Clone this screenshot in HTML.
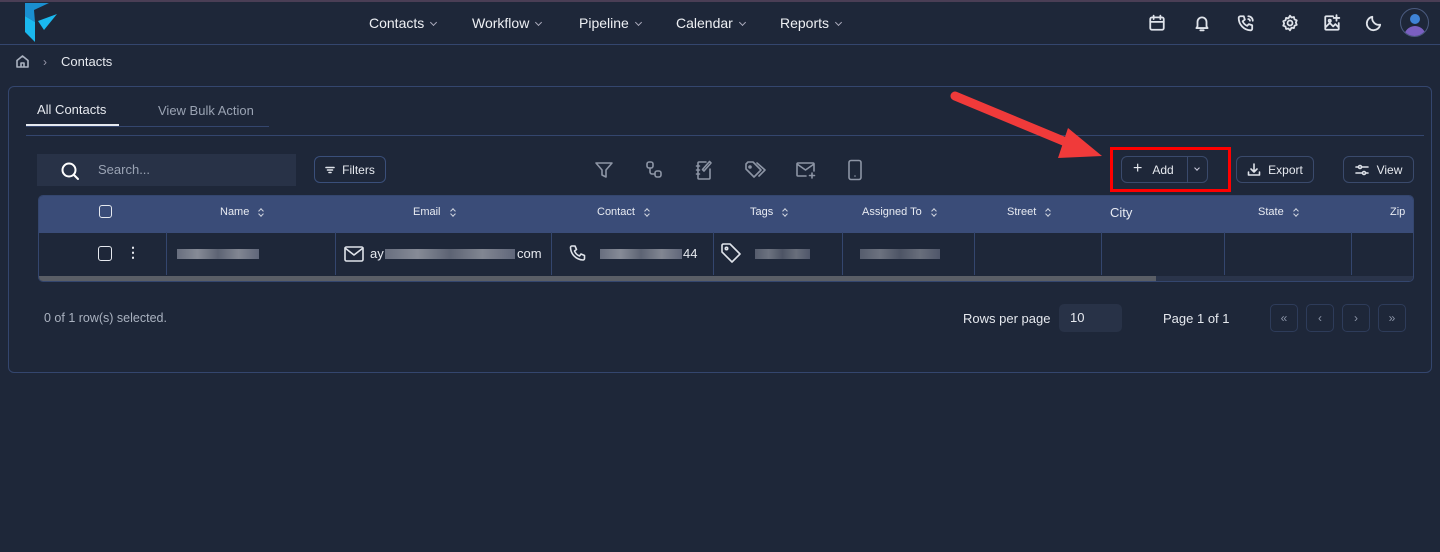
<!DOCTYPE html>
<html><head><meta charset="utf-8"><style>
*{box-sizing:border-box;margin:0;padding:0}
body{width:1440px;height:552px;background:#1e2739;font-family:"Liberation Sans",sans-serif;color:#e6e9ef;position:relative;overflow:hidden;font-size:13px}
.a{position:absolute}
.nav{font-size:14px;color:#eef0f4}
.nav i{display:inline-block;width:5px;height:5px;border-right:1px solid #aab;border-bottom:1px solid #aab;transform:rotate(45deg);margin-left:7px;position:relative;top:-3px}
svg{position:absolute;fill:none;stroke:#dfe3ea;stroke-width:1.6;stroke-linecap:round;stroke-linejoin:round}
.ic svg{stroke:#8d95a5}
.btn{position:absolute;border:1px solid #3a4a6c;border-radius:6px;height:27px;font-size:12px;color:#e6e9ef;display:flex;align-items:center;justify-content:center}
.th{position:absolute;top:206px;font-size:11px;color:#e8ebf2;display:flex;align-items:center}
.th b{display:inline-block;width:6px;height:10px;margin-left:9px;position:relative}
.th b:before,.th b:after{content:"";position:absolute;left:1px;width:3px;height:3px;border-left:1px solid #cfd4de;border-top:1px solid #cfd4de}
.th b:before{top:2px;transform:rotate(45deg)}
.th b:after{top:5px;transform:rotate(225deg)}
.vl{position:absolute;top:232px;height:43px;width:1px;background:#34466e}
.blur{position:absolute;height:10px;background:linear-gradient(90deg,#7a8090,#a0a4ae,#6c7282,#9a9ea8,#70768a);opacity:.8}
.pg{position:absolute;top:304px;width:28px;height:28px;border:1px solid #2e3c5a;border-radius:5px;color:#8a93a6;font-size:12px;text-align:center;line-height:26px}
</style></head><body>
<div class="a" style="left:0;top:0;width:1440px;height:2px;background:#4a3e55"></div>
<div class="a" style="left:0;top:44px;width:1440px;height:1px;background:#34466e"></div>
<svg style="left:24px;top:2px;stroke:none" width="36" height="42" viewBox="0 0 36 42"><path d="M1 1L25 1L10 8L11 20L1 14Z" fill="#1a8fd0"/><path d="M1 14L11 20L11 40L1 30Z" fill="#1ab8ee"/><path d="M14 19L33 12L20 28Z" fill="#1ab8ee"/></svg>
<div class="a nav" style="left:369px;top:15px">Contacts<i></i></div>
<div class="a nav" style="left:472px;top:15px">Workflow<i></i></div>
<div class="a nav" style="left:579px;top:15px">Pipeline<i></i></div>
<div class="a nav" style="left:676px;top:15px">Calendar<i></i></div>
<div class="a nav" style="left:780px;top:15px">Reports<i></i></div>
<svg style="left:1148px;top:14px" width="18" height="18" viewBox="0 0 16 16"><rect x="2" y="3" width="12" height="11" rx="1.5"/><path d="M2 7h12M5 1.5v3M11 1.5v3"/></svg>
<svg style="left:1193px;top:14px" width="18" height="18" viewBox="0 0 16 16"><path d="M4 11V7a4 4 0 018 0v4l1 1.5H3z M6.5 14.5h3"/></svg>
<svg style="left:1237px;top:14px" width="18" height="18" viewBox="0 0 16 16"><path d="M3 2h3l1 3-2 1.5a8 8 0 004 4L10.5 9l3 1v3a1.5 1.5 0 01-1.5 1.5A11 11 0 011.5 3.5 1.5 1.5 0 013 2zM10 2a4 4 0 014 4M10 4.5a1.5 1.5 0 011.5 1.5"/></svg>
<svg style="left:1281px;top:14px" width="18" height="18" viewBox="0 0 16 16"><circle cx="8" cy="8" r="2.2"/><path d="M8 1.5l1.4 1.6 2.1-.4.5 2.1 2 .8-.8 2 .8 2-2 .8-.5 2.1-2.1-.4L8 14.5l-1.4-1.6-2.1.4-.5-2.1-2-.8.8-2-.8-2 2-.8.5-2.1 2.1.4z"/></svg>
<svg style="left:1323px;top:14px" width="18" height="18" viewBox="0 0 16 16"><path d="M9 2H3a1 1 0 00-1 1v10a1 1 0 001 1h10a1 1 0 001-1V8M2 12l4-4 3 3 2-2 3 3M12 1v5M9.5 3.5h5"/><circle cx="6" cy="6" r="1"/></svg>
<svg style="left:1365px;top:14px" width="18" height="18" viewBox="0 0 16 16"><path d="M13.5 9.5A6 6 0 016.5 2.5a6 6 0 107 7z"/></svg>
<div class="a" style="left:1400px;top:8px;width:29px;height:29px;border-radius:50%;border:1px solid #4a5a7e;overflow:hidden;background:#1e2739">
<div class="a" style="left:9px;top:5px;width:10px;height:10px;border-radius:50%;background:#3f83d6"></div>
<div class="a" style="left:3px;top:17px;width:22px;height:14px;border-radius:11px 11px 0 0;background:#7a5fc0"></div></div>
<svg style="left:15px;top:54px;stroke:#aab2c0" width="15" height="15" viewBox="0 0 15 15"><path d="M2 6.5L7.5 2 13 6.5V13H2zM6 13V9h3v4"/></svg>
<div class="a" style="left:43px;top:55px;color:#99a;font-size:12px">›</div>
<div class="a" style="left:61px;top:54px;font-size:13px">Contacts</div>
<div class="a" style="left:8px;top:86px;width:1424px;height:287px;border:1px solid #34466e;border-radius:6px"></div>
<div class="a" style="left:37px;top:102px;font-size:13px">All Contacts</div>
<div class="a" style="left:158px;top:103px;font-size:13px;color:#9aa3b3">View Bulk Action</div>
<div class="a" style="left:26px;top:126px;width:243px;height:1px;background:#34466e"></div>
<div class="a" style="left:26px;top:124px;width:93px;height:2px;background:#e6e9ef"></div>
<div class="a" style="left:26px;top:135px;width:1398px;height:1px;background:#34466e"></div>
<div class="a" style="left:37px;top:154px;width:259px;height:32px;background:#283247"></div>
<svg style="left:60px;top:161px;stroke:#fff;stroke-width:2" width="20" height="20" viewBox="0 0 20 20"><circle cx="9" cy="9" r="6.5"/><path d="M14 14l4 4"/></svg>
<div class="a" style="left:98px;top:162px;color:#9aa3b3;font-size:13px">Search...</div>
<div class="btn" style="left:314px;top:156px;width:72px;border-color:#3a4f7a"><svg style="position:static;margin-right:7px" width="10" height="10" viewBox="0 0 10 10"><path d="M1 2.5h8M2.5 5h5M4 7.5h2"/></svg>Filters</div>
<div class="ic">
<svg style="left:594px;top:160px" width="20" height="20" viewBox="0 0 20 20"><path d="M2 3h16l-6 7v7l-4-2v-5z"/></svg>
<svg style="left:644px;top:160px" width="20" height="20" viewBox="0 0 20 20"><rect x="3" y="2" width="6" height="6" rx="2"/><rect x="11" y="11" width="6" height="6" rx="2"/><path d="M6 8v4a2 2 0 002 2h3"/></svg>
<svg style="left:694px;top:159px" width="20" height="22" viewBox="0 0 20 22"><path d="M12 3H5a1 1 0 00-1 1v15a1 1 0 001 1h10a1 1 0 001-1V10M2.5 7h3M2.5 11h3M2.5 15h3M10 12l7-8-1.5-1.5-7 8z"/></svg>
<svg style="left:744px;top:160px" width="24" height="20" viewBox="0 0 24 20"><path d="M2 4v5l8 8 7-7-8-8H4zM13 3l8 7-6 6"/><circle cx="6" cy="7" r="1"/></svg>
<svg style="left:795px;top:160px" width="22" height="20" viewBox="0 0 22 20"><path d="M11 16H3a1 1 0 01-1-1V4a1 1 0 011-1h15a1 1 0 011 1v7M2 4l8.5 6L19 4M17 13v5M14.5 15.5h5"/></svg>
<svg style="left:846px;top:159px" width="18" height="22" viewBox="0 0 18 22"><rect x="3" y="1.5" width="12" height="19" rx="2"/><path d="M9 17h0"/></svg>
</div>
<svg style="left:950px;top:90px;stroke:none" width="160" height="75" viewBox="0 0 160 75"><path d="M5 6L135 60" stroke="#f03a3a" stroke-width="9" stroke-linecap="round" fill="none"/><path d="M118 38L152 66 108 68Z" fill="#f03a3a"/></svg>
<div class="a" style="left:1110px;top:147px;width:121px;height:45px;border:3px solid #ff0000"></div>
<div class="btn" style="left:1121px;top:156px;width:87px;justify-content:flex-start"><span style="margin-left:11px;font-size:16px;margin-top:-2px">+</span><span style="margin-left:10px">Add</span>
<div class="a" style="left:65px;top:0;width:1px;height:25px;background:#3a4a6c"></div><i class="a" style="left:73px;top:9px;width:4px;height:4px;border-right:1px solid #ccd;border-bottom:1px solid #ccd;transform:rotate(45deg)"></i></div>
<div class="btn" style="left:1236px;top:156px;width:78px"><svg style="position:static;margin-right:7px" width="14" height="14" viewBox="0 0 14 14"><path d="M7 1v8M4 6l3 3 3-3M1.5 9v3h11V9"/></svg>Export</div>
<div class="btn" style="left:1343px;top:156px;width:71px"><svg style="position:static;margin-right:8px" width="14" height="14" viewBox="0 0 14 14"><path d="M1 4h12M1 10h12"/><circle cx="5" cy="4" r="1.5" fill="#1e2739"/><circle cx="9" cy="10" r="1.5" fill="#1e2739"/></svg>View</div>
<div class="a" style="left:38px;top:195px;width:1376px;height:87px;border:1px solid #34466e;border-radius:5px;overflow:hidden">
<div class="a" style="left:0;top:0;width:1376px;height:37px;background:#3a4c78"></div>
<div class="a" style="left:0;top:80px;width:1376px;height:6px;background:#2a344a"></div>
<div class="a" style="left:0;top:80px;width:1117px;height:6px;background:#5a5e66"></div>
</div>
<div class="a" style="left:99px;top:205px;width:13px;height:13px;border:1.5px solid #e6e9ef;border-radius:3px"></div>
<div class="th" style="left:220px">Name<b></b></div>
<div class="th" style="left:413px">Email<b></b></div>
<div class="th" style="left:597px">Contact<b></b></div>
<div class="th" style="left:750px">Tags<b></b></div>
<div class="th" style="left:862px">Assigned To<b></b></div>
<div class="th" style="left:1007px">Street<b></b></div>
<div class="th" style="left:1110px;font-size:13px;top:205px">City</div>
<div class="th" style="left:1258px">State<b></b></div>
<div class="th" style="left:1390px">Zip</div>
<div class="vl" style="left:166px"></div><div class="vl" style="left:335px"></div><div class="vl" style="left:551px"></div><div class="vl" style="left:713px"></div><div class="vl" style="left:842px"></div><div class="vl" style="left:974px"></div><div class="vl" style="left:1101px"></div><div class="vl" style="left:1224px"></div><div class="vl" style="left:1351px"></div>
<div class="a" style="left:98px;top:246px;width:14px;height:15px;border:1.5px solid #e6e9ef;border-radius:3px"></div>
<div class="a" style="left:126px;top:244px;font-size:14px;font-weight:bold">⋮</div>
<div class="blur" style="left:177px;top:249px;width:82px"></div>
<svg style="left:343px;top:245px" width="22" height="18" viewBox="0 0 22 18"><rect x="2" y="2" width="18" height="14" rx="1.5"/><path d="M2 3l9 7 9-7"/></svg>
<div class="a" style="left:370px;top:246px;font-size:13px">ay</div><div class="blur" style="left:385px;top:249px;width:130px"></div><div class="a" style="left:517px;top:246px;font-size:13px">com</div>
<svg style="left:569px;top:244px" width="18" height="18" viewBox="0 0 18 18"><path d="M3 2h3l1.5 3.5-2 1.5a9 9 0 005 5l1.5-2 3.5 1.5v3a1.5 1.5 0 01-1.5 1.5A13 13 0 011.5 3.5 1.5 1.5 0 013 2z"/></svg>
<div class="blur" style="left:600px;top:249px;width:82px"></div><div class="a" style="left:683px;top:246px;font-size:13px">44</div>
<svg style="left:720px;top:242px" width="24" height="22" viewBox="0 0 24 22"><path d="M2 3v7l10 10 8-8L10 2H3z"/><circle cx="6.5" cy="6.5" r="1.2"/></svg>
<div class="blur" style="left:755px;top:249px;width:55px;opacity:.6"></div>
<div class="blur" style="left:860px;top:249px;width:80px;opacity:.6"></div>
<div class="a" style="left:44px;top:311px;font-size:12.5px;color:#aab2c0">0 of 1 row(s) selected.</div>
<div class="a" style="left:963px;top:311px;font-size:13px">Rows per page</div>
<div class="a" style="left:1059px;top:304px;width:63px;height:28px;background:#283247;border-radius:5px;font-size:13px;padding:6px 11px">10</div>
<div class="a" style="left:1163px;top:311px;font-size:13px">Page 1 of 1</div>
<div class="pg" style="left:1270px">«</div><div class="pg" style="left:1306px">‹</div><div class="pg" style="left:1342px">›</div><div class="pg" style="left:1378px">»</div>
</body></html>
